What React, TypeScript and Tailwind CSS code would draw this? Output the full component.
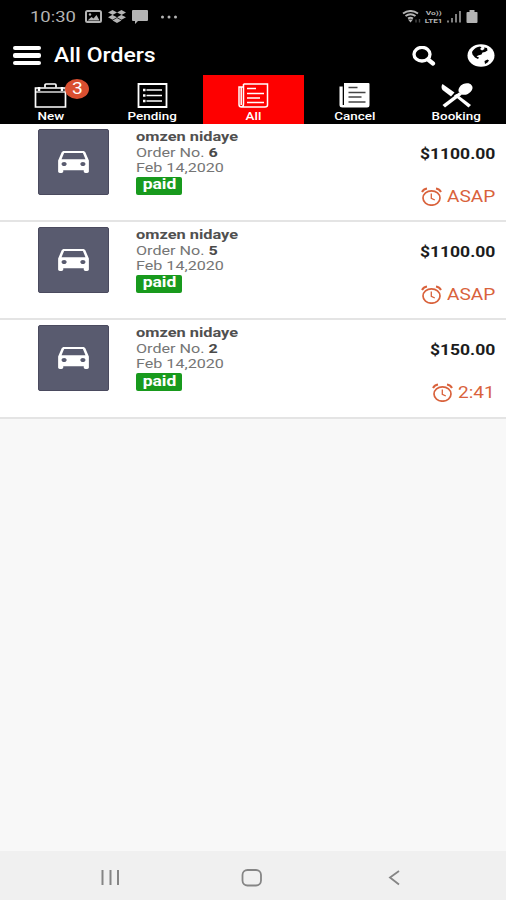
import type { ReactNode } from "react";
import { FaDropbox } from "react-icons/fa";
import { MdDirectionsCar } from "react-icons/md";

type Order = {
  id: number;
  name: string;
  date: string;
  price: string;
  time: string;
};

const orders: Order[] = [
  { id: 6, name: "omzen nidaye", date: "Feb 14,2020", price: "$1100.00", time: "ASAP" },
  { id: 5, name: "omzen nidaye", date: "Feb 14,2020", price: "$1100.00", time: "ASAP" },
  { id: 2, name: "omzen nidaye", date: "Feb 14,2020", price: "$150.00", time: "2:41" },
];

function StatusBar() {
  return (
    <div className="flex h-8 items-center justify-between pl-[30px] pr-7 pt-px text-[#b4b4b4]">
      <div className="flex items-center">
        <span className="w-[55px] origin-left translate-y-px scale-x-[1.23] whitespace-nowrap text-[15px] leading-none">
          10:30
        </span>
        <svg viewBox="0 0 17 13" className="h-[13px] w-[17px]" aria-hidden>
          <rect x="1" y="1" width="15" height="11" rx="1.500" fill="none" stroke="currentColor" strokeWidth="2" />
          <path d="M2.500 10.500 6.500 7l2 1.500 3-3.500 3 5.500z" fill="currentColor" />
          <circle cx="5" cy="4.500" r="1.200" fill="currentColor" />
        </svg>
        <FaDropbox className="ml-1.5 h-[15px] w-[18px]" preserveAspectRatio="none" />
        <svg viewBox="0 0 18 14" className="ml-[5px] h-3.5 w-[18px]" fill="currentColor" aria-hidden>
          <path d="M2 0h14q1 0 1 1v9q0 1-1 1H7l-3 3v-3H2q-1 0-1-1V1q0-1 1-1z" />
        </svg>
        <svg viewBox="0 0 18 4" className="ml-[11px] h-1 w-[18px]" fill="currentColor" aria-hidden>
          <circle cx="2.500" cy="2" r="1.500" />
          <circle cx="9" cy="2" r="1.500" />
          <circle cx="15.500" cy="2" r="1.500" />
        </svg>
      </div>
      <div className="flex items-center">
        <svg viewBox="0 0 20 14" className="h-3.5 w-5" fill="none" stroke="currentColor" aria-hidden>
          <path d="M1 3.500q7.500-5 15 0M3.500 6q5-3.500 10 0M6 8.500q2.500-1.500 5 0" strokeWidth="2" />
          <path d="m6 9.500 2.500 3 2.500-3z" fill="currentColor" stroke="none" />
          <path d="M14 12.500V9.500M17.500 9v3.500" strokeWidth="1.400" opacity="0.4" />
        </svg>
        <div className="ml-0.5 flex w-5 flex-col items-center gap-px text-[6px] font-bold leading-[7px]">
          <div className="scale-x-[1.4]">Vo))</div>
          <div className="scale-x-[1.35] whitespace-nowrap">LTE1</div>
        </div>
        <svg viewBox="0 0 14 13" className="ml-[3px] h-[13px] w-3.5" stroke="currentColor" strokeWidth="1.400" aria-hidden>
          <path d="M1 12.500v-2M5 12.500V8M9 12.500V4M13 12.500V1" />
        </svg>
        <svg viewBox="0 0 12 13" className="ml-[5px] h-[13px] w-3" fill="currentColor" aria-hidden>
          <path d="M3.500 0h5v2H11q.5 0 .5 1v9q0 1-1 1h-9q-1 0-1-1V3q0-1 1-1h2z" />
        </svg>
      </div>
    </div>
  );
}

function Header() {
  return (
    <div className="flex h-[42px] items-center pl-[13px] pr-[11px] pt-[5px] text-white">
      <button type="button" aria-label="Menu" className="flex flex-col gap-[3px]">
        <span className="h-[4.500px] w-7 rounded-[2px] bg-white" />
        <span className="h-[4.500px] w-7 rounded-[2px] bg-white" />
        <span className="h-[4.500px] w-7 rounded-[2px] bg-white" />
      </button>
      <h1 className="ml-[13px] origin-left -translate-y-px scale-x-[1.15] whitespace-nowrap text-[20px] font-medium leading-none">
        All Orders
      </h1>
      <button type="button" aria-label="Search" className="ml-auto">
        <svg viewBox="0 0 24 20" className="h-5 w-6" fill="none" stroke="currentColor" aria-hidden>
          <ellipse cx="10" cy="8.200" rx="8" ry="6.800" strokeWidth="3.300" />
          <path d="m16 13.500 5 4" strokeWidth="4.200" strokeLinecap="round" />
        </svg>
      </button>
      <button type="button" aria-label="Language" className="ml-[31px]">
        <svg viewBox="0 0 28 23" className="h-[23px] w-7" aria-hidden>
          <ellipse cx="14" cy="11.500" rx="13.500" ry="11.300" fill="#fff" />
          <path d="M6 6.500Q8.500 3 13 2.500l1.500 1-1.500 1.500 2 1.500 2.500-1.500-.5-1.500 3 .5.5 2.500-2.500 1.500-2.500.5-1 2-3.500 1-1.500 1 2.500 1-1 1.500-3-1.500-2.500-3-.5-2.500zM17.500 17l3-1.500 1.500 1-1.500 2-2.500 1.500z" fill="#000" />
          <path d="m6.500 7 4-3 4 3-3 3.500-3 1z" fill="#000" />
        </svg>
      </button>
    </div>
  );
}

function BriefcaseIcon() {
  return (
    <svg viewBox="0 0 33 25" className="h-[25px] w-[33px]" fill="none" stroke="currentColor" aria-hidden>
      <path d="M1.500 5h30v19h-30z" strokeWidth="1.700" />
      <path d="M1.500 9h30" strokeWidth="1.300" />
      <path d="M11 4.500V2q0-1 1-1h9q1 0 1 1v2.500" strokeWidth="1.700" />
      <path d="M5 4v4M28 4v4" strokeWidth="2.500" />
    </svg>
  );
}

function ListIcon() {
  return (
    <svg viewBox="0 0 31 25" className="h-[25px] w-[31px]" fill="none" stroke="currentColor" aria-hidden>
      <path d="M1.500 1h28v23h-28z" strokeWidth="1.800" />
      <path d="M6 7h2.500M6 12.500h2.500M6 18h2.500" strokeWidth="2.600" />
      <path d="M9.500 7H25M9.500 12.500H25M9.500 18H25" strokeWidth="1.700" />
    </svg>
  );
}

function PaperIcon() {
  return (
    <svg viewBox="0 0 31 25" className="h-[25px] w-[31px]" fill="none" stroke="currentColor" strokeWidth="1.500" aria-hidden>
      <path d="M5.500 1h24v21q0 2-2.500 2H3.500Q1 24 1 21.500V4h4.500M5.500 1v20q0 3-2.500 3M3.200 4v18" />
      <path d="M9 5.500h9M9 10.500h17M9 15h13M9 19.500h17" />
    </svg>
  );
}

function PaperFilledIcon() {
  return (
    <svg viewBox="0 0 31 25" className="h-[25px] w-[31px]" aria-hidden>
      <path d="M5 0h24.500q1 0 1 1v21q0 2.500-2.500 2.500H3.500Q.5 24.500.5 22V3.500h3.200V22H5z" fill="currentColor" />
      <path d="M9.500 4.500h9M9.500 9.500h17M9.500 14h13M9.500 19h17" stroke="#444" strokeWidth="1.300" />
    </svg>
  );
}

function CutleryIcon() {
  return (
    <svg viewBox="0 0 33 25" className="h-[25px] w-[33px]" fill="currentColor" aria-hidden>
      <path d="M2.500 1 14.500 9.500l-3.500 4L2.500 7Q.5 4 2.500 1z" />
      <path d="M14 12.500 16.500 11 31 22l-2.500 2.500z" />
      <path d="M5 24.500 2.500 22 19 9.500l3 2z" />
      <ellipse cx="25.500" cy="6" rx="7.300" ry="5.500" transform="rotate(-25 25.500 6)" />
    </svg>
  );
}

function Tab({
  label,
  active = false,
  badge,
  children,
}: {
  label: string;
  active?: boolean;
  badge?: number;
  children: ReactNode;
}) {
  return (
    <button
      type="button"
      className={`flex flex-1 flex-col items-center pt-[8.500px] text-white ${active ? "bg-[#fe0000]" : ""}`}
    >
      <span className="relative">
        {children}
        {badge ? (
          <span className="absolute -right-[22px] -top-1 flex h-5 w-6 items-center justify-center rounded-[50%] bg-[#d94f30] text-[16px] leading-none">
            <span className="scale-x-[1.2]">{badge}</span>
          </span>
        ) : null}
      </span>
      <span className="mt-[2.500px] scale-x-[1.22] whitespace-nowrap text-[11px] font-medium leading-[12px]">
        {label}
      </span>
    </button>
  );
}

function AlarmIcon() {
  return (
    <svg viewBox="0 0 21 19" className="h-[19px] w-[21px]" fill="none" stroke="currentColor" strokeWidth="1.700" aria-hidden>
      <ellipse cx="10.500" cy="11" rx="8.500" ry="7.200" />
      <path d="M1 5Q2.500 2 6 1.500M20 5Q18.500 2 15 1.500" strokeWidth="2" />
      <path d="M10.300 6.500v4.800l3.500 1.700" strokeWidth="1.300" />
    </svg>
  );
}

function OrderRow({ order }: { order: Order }) {
  return (
    <li className="flex h-[98.200px] border-b-2 border-[#e4e4e4] bg-white pl-[38px] pr-[11px] pt-[4.500px]">
      <div className="flex h-[66px] w-[71px] items-center justify-center rounded-[2px] border border-[#4a4a5e] bg-[#595b6f] pb-[2px] text-white">
        <MdDirectionsCar className="h-[33px] w-[41px]" preserveAspectRatio="none" />
      </div>
      <div className="ml-[27px] mt-[0.500px] flex flex-col items-start whitespace-nowrap text-[13px] leading-[15.500px] text-[#757575]">
        <div className="origin-left scale-x-[1.26] font-bold text-[#505050]">{order.name}</div>
        <div className="origin-left scale-x-[1.24]">
          Order No. <b className="text-[#4a4a4a]">{order.id}</b>
        </div>
        <div className="origin-left scale-x-[1.24]">{order.date}</div>
        <div className="mt-px flex h-[18px] w-[46px] items-center justify-center rounded-[2px] bg-[#189a1d] pb-px font-bold text-white">
          <span className="scale-x-[1.25] text-[14px]">paid</span>
        </div>
      </div>
      <div className="ml-auto flex flex-col items-end whitespace-nowrap">
        <div className="mt-[17px] origin-right scale-x-[1.25] text-[14px] font-bold leading-4 text-[#1c1c1c]">
          {order.price}
        </div>
        <div className="mt-[25px] flex items-center text-[#d9623c]">
          <AlarmIcon />
          <span
            className={`ml-[5px] origin-left scale-x-[1.19] text-[16px] leading-5 ${order.time === "ASAP" ? "w-[48px]" : "w-[37px]"}`}
          >
            {order.time}
          </span>
        </div>
      </div>
    </li>
  );
}

function NavigationBar() {
  return (
    <div className="flex h-[49px] items-center bg-[#f0f0f0] pl-[101px] pt-1 text-[#858585]">
      <svg viewBox="0 0 20 16" className="h-4 w-5" stroke="currentColor" strokeWidth="2" aria-hidden>
        <path d="M1.500 0v15M9.500 0v15M17 0v15" />
      </svg>
      <svg viewBox="0 0 22 18" className="ml-[120px] h-[18px] w-[22px]" fill="none" stroke="currentColor" strokeWidth="1.800" aria-hidden>
        <rect x="1.500" y="1" width="18.500" height="15.500" rx="5" />
      </svg>
      <svg viewBox="0 0 12 16" className="ml-[125px] h-4 w-3" fill="none" stroke="currentColor" strokeWidth="1.800" aria-hidden>
        <path d="M11 1 2 7.500l9 7" />
      </svg>
    </div>
  );
}

export default function App() {
  return (
    <div className="flex h-[900px] w-[506px] flex-col overflow-hidden bg-[#f8f8f8] font-[Roboto,sans-serif]">
      <header className="flex h-[124px] flex-col bg-black">
        <StatusBar />
        <Header />
        <nav className="mt-[0.500px] flex w-[507px] flex-1">
          <Tab label="New" badge={3}>
            <BriefcaseIcon />
          </Tab>
          <Tab label="Pending">
            <ListIcon />
          </Tab>
          <Tab label="All" active>
            <PaperIcon />
          </Tab>
          <Tab label="Cancel">
            <PaperFilledIcon />
          </Tab>
          <Tab label="Booking">
            <CutleryIcon />
          </Tab>
        </nav>
      </header>
      <ul className="flex-1">
        {orders.map((order) => (
          <OrderRow key={order.id} order={order} />
        ))}
      </ul>
      <NavigationBar />
    </div>
  );
}
